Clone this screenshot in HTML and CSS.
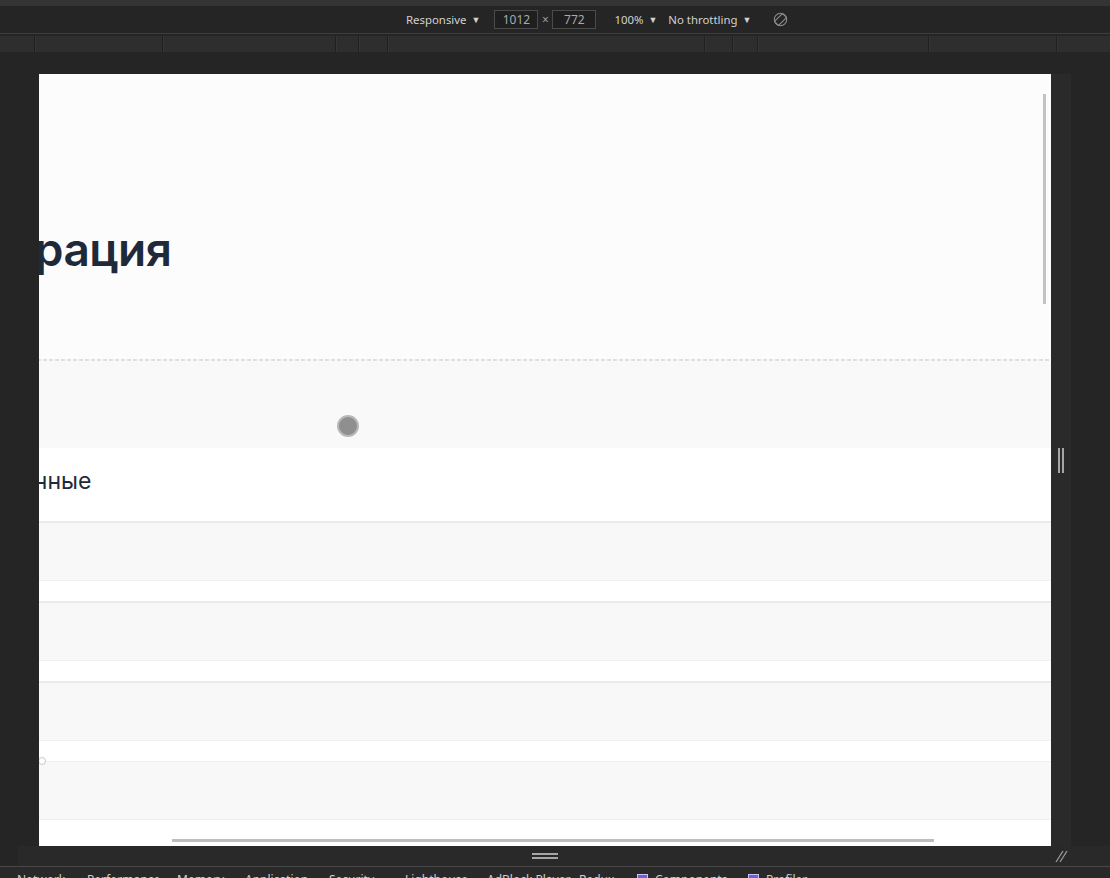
FILE: index.html
```html
<!DOCTYPE html>
<html lang="ru">
<head>
<meta charset="utf-8">
<title>Регистрация — DevTools</title>
<link rel="stylesheet" href="styles.css">
</head>
<body>
<div class="topstrip"></div>
<div class="toolbar">
  <span class="dd dd-device">Responsive <span class="caret">▼</span></span>
  <span class="dims">
    <span class="numbox">1012</span>
    <span class="times">×</span>
    <span class="numbox">772</span>
  </span>
  <span class="dd dd-zoom">100% <span class="caret">▼</span></span>
  <span class="dd dd-throttle">No throttling <span class="caret">▼</span></span>
  <svg class="rotate" width="15" height="15" viewBox="0 0 15 15">
    <circle cx="7.5" cy="7.5" r="6.2" fill="none" stroke="#8d8d8d" stroke-width="1.1"/>
    <rect x="4.6" y="1.8" width="5.8" height="11.4" rx="1.2" transform="rotate(45 7.5 7.5)" fill="none" stroke="#8d8d8d" stroke-width="1.1"/>
  </svg>
</div>
<div class="ruler">
  <span class="seg"></span><span class="seg"></span><span class="seg"></span><span class="seg"></span>
  <span class="seg"></span><span class="seg"></span><span class="seg"></span><span class="seg"></span>
  <span class="seg"></span><span class="seg"></span><span class="seg"></span>
</div>
<div class="stage">
  <div class="stage-row">
    <div class="viewport">
      <div class="page">
        <header class="hero">
          <h1 class="hero-title">Регистрация</h1>
        </header>
        <div class="divider"></div>
        <section class="progress">
          <span class="dot"></span>
        </section>
        <section class="form">
          <h2 class="form-title">Личные данные</h2>
          <div class="field"></div>
          <div class="field"></div>
          <div class="field"></div>
          <div class="field field-last"><span class="radio"></span></div>
        </section>
      </div>
      <div class="vscroll"></div>
      <div class="hscroll"></div>
    </div>
    <div class="side-handle"><span class="bar"></span><span class="bar"></span></div>
  </div>
  <div class="bottom-row">
    <div class="bottom-handle"><span class="hbar"></span><span class="hbar"></span></div>
    <div class="corner">
      <svg width="14" height="14" viewBox="0 0 14 14">
        <line x1="1" y1="13" x2="8" y2="2" stroke="#9a9a9a" stroke-width="1.3"/>
        <line x1="5" y1="13" x2="12" y2="2" stroke="#9a9a9a" stroke-width="1.3"/>
      </svg>
    </div>
  </div>
</div>
<div class="tabs">
  <span class="tab t1">Network</span>
  <span class="tab t2">Performance</span>
  <span class="tab t3">Memory</span>
  <span class="tab t4">Application</span>
  <span class="tab t5">Security</span>
  <span class="tab t6">Lighthouse</span>
  <span class="tab t7">AdBlock Player</span>
  <span class="tab t8">Redux</span>
  <span class="tab t9"><span class="ext"></span>Components</span>
  <span class="tab t10"><span class="ext"></span>Profiler</span>
</div>
</body>
</html>
```

FILE: styles.css
```css
* { box-sizing: border-box; }
html, body {
  margin: 0;
  padding: 0;
  width: 1110px;
  height: 878px;
  overflow: hidden;
  background: #252525;
  font-family: "Noto Sans", "Open Sans", sans-serif;
}

.topstrip {
  height: 6px;
  background: #343434;
}

.toolbar {
  height: 28px;
  background: #252525;
  border-bottom: 1px solid #3e3e3e;
  display: flex;
  align-items: center;
  padding-left: 406px;
  font-size: 11.4px;
  color: #d2d2d2;
}
.dd { white-space: nowrap; }
.caret { font-size: 9px; position: relative; top: -1px; margin-left: 2px; }
.dd-device { margin-right: 14px; }
.dims { display: flex; align-items: center; margin-right: 18px; }
.numbox {
  width: 44px;
  height: 19px;
  border: 1px solid #4b4b4b;
  background: #1f1f1f;
  color: #a9a9a9;
  display: flex;
  align-items: center;
  justify-content: center;
  font-size: 12px;
}
.times { color: #9c9c9c; width: 14px; text-align: center; font-size: 12px; }
.dd-zoom { margin-right: 11px; }
.dd-throttle { margin-right: 22px; }
.rotate { display: block; }

.ruler {
  margin-top: 2px;
  height: 16px;
  display: grid;
  grid-template-columns: 34px 128px 173px 23px 29px 317px 28px 25px 171px 128px 1fr;
  background: #2e2e2e;
}
.seg {
  border-left: 1px solid #202020;
  box-shadow: inset 1px 0 0 #363636;
}
.seg:first-child { border-left: none; box-shadow: none; }

.stage {
  height: 814px;
  padding-top: 22px;
  background: #252525;
}
.stage-row {
  display: flex;
  padding-left: 39px;
}
.viewport {
  width: 1012px;
  height: 772px;
  overflow: hidden;
  position: relative;
  background: #ffffff;
}
.page {
  margin-left: -200px;
  width: 1212px;
  font-family: "Inter", "Noto Sans", sans-serif;
}

.hero {
  height: 285px;
  padding-top: 152px;
  background: #fcfcfc;
}
.hero-title {
  margin: 0;
  padding-left: 43px;
  font-size: 46px;
  line-height: 1;
  font-weight: 600;
  letter-spacing: -0.5px;
  color: #1e2a3a;
}
.divider {
  height: 2px;
  background-color: #fcfcfc;
  background-image: repeating-linear-gradient(90deg, #dedede 0 4px, transparent 4px 6px);
}

.progress {
  height: 87px;
  background: #f9f9f9;
  padding-top: 54px;
  padding-left: 498px;
}
.dot {
  display: block;
  width: 22px;
  height: 22px;
  border-radius: 50%;
  background: #8f8f8f;
  border: 2px solid #b8b8b8;
}

.form {
  background: #ffffff;
  height: 398px;
}
.form-title {
  margin: 0;
  height: 73px;
  padding-top: 22px;
  padding-left: 73px;
  font-size: 23px;
  line-height: 1;
  font-weight: 400;
  color: #1e2a3a;
}
.field {
  height: 60px;
  margin-bottom: 20px;
  background: #f8f8f8;
  border-top: 2px solid #ebebeb;
  border-bottom: 1px solid #efefef;
}
.field-last {
  position: relative;
  border-top: 1px solid #f0f0f0;
  height: 59px;
}
.radio {
  position: absolute;
  left: 199px;
  top: -5px;
  width: 8px;
  height: 8px;
  border-radius: 50%;
  border: 1.5px solid #c8c8c8;
  background: #ffffff;
}

.vscroll {
  position: absolute;
  right: 5px;
  top: 20px;
  width: 3px;
  height: 210px;
  background: #c3c3c3;
}
.hscroll {
  position: absolute;
  left: 133px;
  top: 765px;
  width: 762px;
  height: 3px;
  background: #bdbdbd;
}

.side-handle {
  width: 20px;
  height: 772px;
  background: #2a2a2a;
  display: flex;
  align-items: center;
  justify-content: center;
  gap: 2px;
}
.bar {
  width: 2px;
  height: 25px;
  background: #a6a6a6;
}

.bottom-row {
  display: flex;
  height: 20px;
  margin-left: 18px;
  padding-left: 21px;
  background: #292929;
}
.bottom-handle {
  width: 1012px;
  display: flex;
  flex-direction: column;
  align-items: center;
  justify-content: center;
  gap: 2px;
}
.hbar {
  width: 26px;
  height: 2px;
  background: #a6a6a6;
}
.corner {
  width: 20px;
  display: flex;
  align-items: center;
  justify-content: center;
}
.corner svg { display: block; margin-left: 2px; }

.tabs {
  height: 40px;
  border-top: 1px solid #474747;
  background: #292929;
  display: flex;
  padding-left: 17px;
  padding-top: 6px;
  font-size: 12px;
  color: #cfcfcf;
  white-space: nowrap;
}
.tab { display: flex; align-items: flex-start; line-height: 14px; }
.t1 { width: 70px; }
.t2 { width: 90px; }
.t3 { width: 68px; }
.t4 { width: 84px; }
.t5 { width: 76px; }
.t6 { width: 82px; }
.t7 { width: 92px; }
.t8 { width: 58px; }
.t9 { width: 111px; }
.ext {
  width: 11px;
  height: 11px;
  margin-top: 1px;
  margin-right: 7px;
  background: #6f5fd6;
  border: 1px solid #c9c2f5;
}
```
